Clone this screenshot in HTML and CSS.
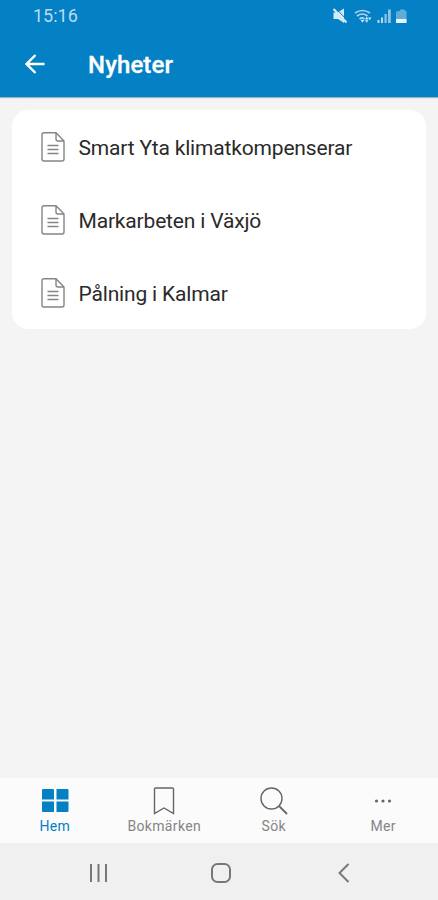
FILE: index.html
```html
<!DOCTYPE html>
<html lang="sv">
<head>
  <meta charset="UTF-8">
  <meta name="viewport" content="width=device-width, initial-scale=1.0">
  <title>Nyheter</title>
  <link rel="stylesheet" href="styles.css">
</head>
<body>
  <header class="header">
    <div class="status-bar">
      <span class="clock">15:16</span>
      <svg class="status-icons" width="76" height="18" viewBox="0 0 76 18">
        <!-- muted -->
        <path d="M1.500 5.500h4l6.500-4v14.500l-6-4H1.500z" fill="#d3e9f7"/>
        <path d="M3.500 1l11.500 12" stroke="#0480c4" stroke-width="1"/>
        <path d="M1.500 2l13 13.500" stroke="#d3e9f7" stroke-width="2.200"/>
        <!-- wifi -->
        <g fill="none" stroke="#a9d3ed" stroke-width="1.700">
          <path d="M23 6q7.500-5 15 0M25 9q5.500-4 10.500 0M27.500 12q2.500-2 5 0"/>
        </g>
        <path d="M28.500 13h4l-2 2.500z" fill="#d3e9f7"/>
        <path d="M33 12.500l1.700-3 1.700 3zM33 13.200h3.400l-1.700 2.500zM36 10.500h3.400l-1.700 2.700z" fill="#d3e9f7"/>
        <!-- signal -->
        <path d="M45.500 13h2v3h-2zM49 10.500h2V16h-2z" fill="#b9dbf0"/>
        <path d="M52.500 7h2.200v9h-2.200zM56 2.500h2.800V16H56z" fill="#8cc3e6"/>
        <!-- battery -->
        <path d="M66 4h2V2.500h5V4h1.500v12H66q-2 0-2-2V6q0-2 2-2z" fill="#5fadd9"/>
        <path d="M64 12h10.500v4H64z" fill="#e6f4fc"/>
      </svg>
    </div>
    <div class="title-bar">
      <svg class="back" width="20" height="20" viewBox="0 0 20 20">
        <path d="M19.500 10H1.500M10.500 1l-9 9 9 9" fill="none" stroke="#fff" stroke-width="2.400"/>
      </svg>
      <h1 class="title">Nyheter</h1>
    </div>
  </header>

  <main class="content">
    <ul class="list">
      <li class="item">
        <svg class="doc" width="24" height="30" viewBox="0 0 24 30">
          <path d="M15 .8H3Q1 .8 1 2.800V27q0 2 2 2h18q2 0 2-2V9zM15 .8V7q0 2 2 2h6M6.500 13.500h11M6.500 17.500h11M6.500 21.500h11"/>
        </svg>
        <span class="label">Smart Yta klimatkompenserar</span>
      </li>
      <li class="item">
        <svg class="doc" width="24" height="30" viewBox="0 0 24 30">
          <path d="M15 .8H3Q1 .8 1 2.800V27q0 2 2 2h18q2 0 2-2V9zM15 .8V7q0 2 2 2h6M6.500 13.500h11M6.500 17.500h11M6.500 21.500h11"/>
        </svg>
        <span class="label">Markarbeten i Växjö</span>
      </li>
      <li class="item">
        <svg class="doc" width="24" height="30" viewBox="0 0 24 30">
          <path d="M15 .8H3Q1 .8 1 2.800V27q0 2 2 2h18q2 0 2-2V9zM15 .8V7q0 2 2 2h6M6.500 13.500h11M6.500 17.500h11M6.500 21.500h11"/>
        </svg>
        <span class="label">Pålning i Kalmar</span>
      </li>
    </ul>
  </main>

  <nav class="tabs">
    <a class="tab active">
      <svg width="30" height="30" viewBox="0 0 30 30">
        <path d="M3 3h10q1 0 1 1v9.500H2V4q0-1 1-1zM16.500 3h11q1 0 1 1v9.500h-12zM2 15.500h12V26H3q-1 0-1-1zM16.500 15.500h12V25q0 1-1 1h-11z" fill="#0480c4"/>
      </svg>
      <span>Hem</span>
    </a>
    <a class="tab">
      <svg width="30" height="30" viewBox="0 0 30 30">
        <path d="M5.500 3Q5.500 2 6.500 2h17q1 0 1 1v24.500L15 22l-9.500 5.500z"/>
      </svg>
      <span>Bokmärken</span>
    </a>
    <a class="tab">
      <svg width="30" height="30" viewBox="0 0 30 30">
        <circle cx="12.500" cy="12.500" r="10.500"/>
        <path d="M20 20l8 8" stroke-width="1.800"/>
      </svg>
      <span>Sök</span>
    </a>
    <a class="tab">
      <svg width="30" height="30" viewBox="0 0 30 30">
        <g fill="#666" stroke="none">
          <circle cx="8.500" cy="15" r="1.600"/>
          <circle cx="15" cy="15" r="1.600"/>
          <circle cx="21.500" cy="15" r="1.600"/>
        </g>
      </svg>
      <span>Mer</span>
    </a>
  </nav>

  <footer class="system-nav">
    <svg width="22" height="22" viewBox="0 0 22 22">
      <path d="M4 2v18M11.500 2v18M19 2v18"/>
    </svg>
    <svg width="22" height="22" viewBox="0 0 22 22">
      <rect x="2" y="2" width="18" height="18" rx="5.500"/>
    </svg>
    <svg width="22" height="22" viewBox="0 0 22 22">
      <path d="M15.500 2l-9 9 9 9"/>
    </svg>
  </footer>
</body>
</html>
```
FILE: styles.css
```css
* {
  box-sizing: border-box;
}

body {
  display: flex;
  flex-direction: column;
  height: 900px;
  margin: 0;
  font-family: Roboto, sans-serif;
  background-color: #f4f4f4;
  color: #2a2a2a;
}

.header {
  height: 97px;
  background-color: #0480c4;
  box-shadow: 0 1px 1px rgba(0, 60, 100, 0.35);
  color: #fff;
}

.status-bar {
  display: flex;
  justify-content: space-between;
  align-items: center;
  height: 31px;
  padding: 0 30px 0 33px;
}

.clock {
  font-size: 18px;
  color: #b9dcf1;
}

.title-bar {
  display: flex;
  align-items: center;
  height: 66px;
  padding-left: 25px;
}

.title {
  margin: 2px 0 0 43px;
  font-size: 24px;
  font-weight: 500;
  letter-spacing: 0.1px;
  -webkit-text-stroke: 0.3px #fff;
}

.content {
  flex: 1;
  padding: 13px 12px;
}

.list {
  margin: 0;
  padding: 0;
  list-style: none;
  background-color: #fff;
  border-radius: 16px;
}

.item {
  display: flex;
  align-items: center;
  gap: 13.5px;
  height: 73px;
  padding: 1px 0 0 29px;
  font-size: 21px;
  letter-spacing: -0.17px;
}

.label {
  padding-top: 2px;
}

.doc {
  fill: none;
  stroke: #858585;
  stroke-width: 1.4;
}

.tabs {
  display: flex;
  height: 65px;
  background-color: #fbfbfb;
}

.tab {
  display: flex;
  flex: 1;
  flex-direction: column;
  align-items: center;
  padding-top: 8px;
  font-size: 14px;
  line-height: 20px;
  letter-spacing: 0.35px;
  color: #858585;
}

.tab svg {
  fill: none;
  stroke: #666;
  stroke-width: 1.4;
}

.tab.active {
  color: #0480c4;
}

.tab.active svg {
  stroke: none;
}

.system-nav {
  display: flex;
  justify-content: space-between;
  align-items: center;
  height: 57px;
  padding: 2px 83px 0 87px;
  background-color: #f0f0f0;
}

.system-nav svg {
  fill: none;
  stroke: #777;
  stroke-width: 2;
}
```
